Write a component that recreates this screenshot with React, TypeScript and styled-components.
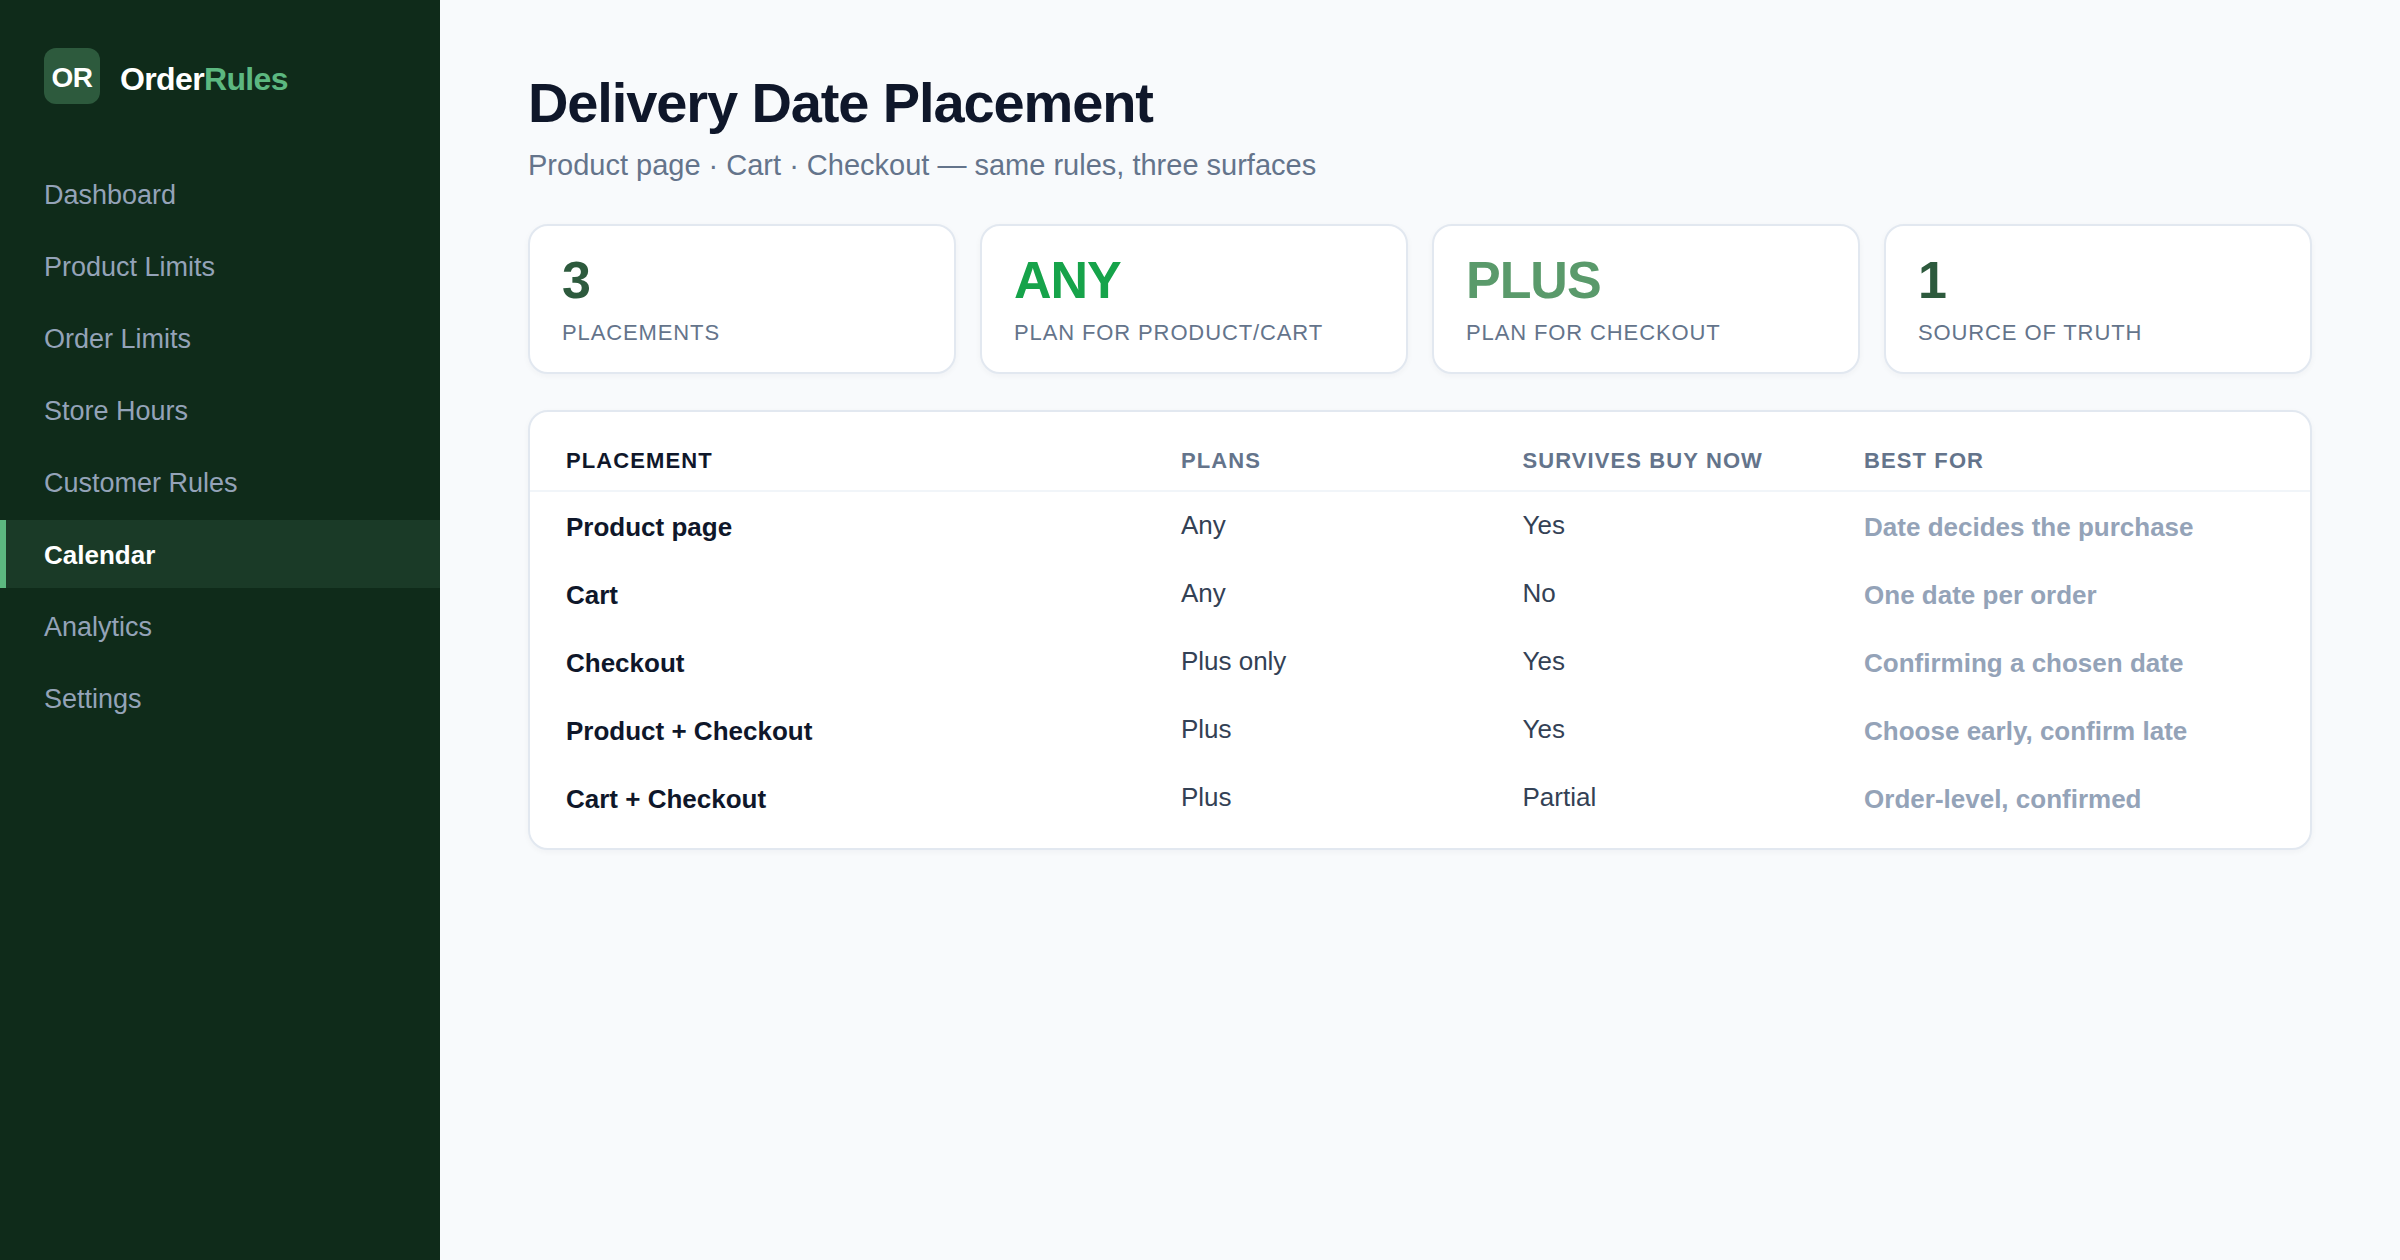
import React from "react";
import styled, { createGlobalStyle } from "styled-components";

const GlobalStyle = createGlobalStyle`
  *, *::before, *::after { box-sizing: border-box; }
  body {
    margin: 0;
    background: #f8fafc;
    color: #0f172a;
    font-family: "Helvetica Neue", "Liberation Sans", Arial, sans-serif;
    -webkit-font-smoothing: antialiased;
  }
`;

const Layout = styled.div`
  display: flex;
  min-height: 100vh;
`;

const Sidebar = styled.aside`
  flex: 0 0 440px;
  padding: 48px 0;
  background: #0f2b1a;
`;

const Brand = styled.div`
  display: flex;
  align-items: center;
  gap: 20px;
  padding: 0 44px;
  margin-bottom: 56px;
`;

const Badge = styled.span`
  display: grid;
  place-items: center;
  width: 56px;
  height: 56px;
  padding-top: 4px;
  border-radius: 12px;
  background: #2d5a3d;
  color: #fff;
  font-size: 28px;
  line-height: 32px;
  font-weight: 700;
  letter-spacing: -0.02em;
`;

const BrandName = styled.span`
  padding-top: 6px;
  color: #fff;
  font-size: 32px;
  line-height: 36px;
  font-weight: 700;
  letter-spacing: -0.02em;
`;

const BrandAccent = styled.span`
  color: #5cb880;
`;

const NavList = styled.ul`
  display: flex;
  flex-direction: column;
  gap: 4px;
  margin: 0;
  padding: 0;
  list-style: none;
`;

const NavLink = styled.a<{ $active?: boolean }>`
  display: flex;
  align-items: center;
  height: 68px;
  padding: 2px 44px 0 38px;
  border-left: 6px solid ${(p) => (p.$active ? "#5cb880" : "transparent")};
  background: ${(p) => (p.$active ? "#1a3a27" : "transparent")};
  color: ${(p) => (p.$active ? "#fff" : "#94a3b8")};
  font-size: ${(p) => (p.$active ? "26px" : "27px")};
  line-height: 32px;
  font-weight: ${(p) => (p.$active ? 700 : 500)};
  text-decoration: none;
`;

const Main = styled.main`
  flex: 1;
  min-width: 0;
  padding: 68px 88px;
`;

const Title = styled.h1`
  margin: 0 0 10px;
  font-size: 56px;
  line-height: 70px;
  font-weight: 700;
  letter-spacing: -0.02em;
`;

const Subtitle = styled.p`
  margin: 0 0 42px;
  color: #64748b;
  font-size: 29px;
  line-height: 34px;
  font-weight: 500;
`;

const Card = styled.section`
  border: 2px solid #e2e8f0;
  border-radius: 20px;
  background: #fff;
  box-shadow: 0 2px 6px rgba(15, 23, 42, 0.04);
`;

const Stats = styled.div`
  display: grid;
  grid-template-columns: repeat(4, 1fr);
  gap: 24px;
  margin-bottom: 36px;
`;

const StatCard = styled(Card)`
  padding: 28px 32px 24px;
`;

const StatValue = styled.div<{ $color: string }>`
  margin-bottom: 12px;
  color: ${(p) => p.$color};
  font-size: 52px;
  line-height: 52px;
  font-weight: 700;
  letter-spacing: -0.02em;
`;

const StatLabel = styled.div`
  color: #64748b;
  font-size: 22px;
  line-height: 30px;
  font-weight: 500;
  letter-spacing: 0.04em;
  text-transform: uppercase;
`;

const TableCard = styled(Card)`
  padding: 16px 0;
`;

const Table = styled.table`
  display: block;
  width: 100%;
  text-align: left;

  thead, tbody { display: block; }
`;

const Row = styled.tr`
  display: grid;
  grid-template-columns: 36fr 20fr 20fr 24fr;
  padding: 0 36px;
`;

const HeadRow = styled(Row)`
  border-bottom: 2px solid #f1f5f9;
`;

const HeadCell = styled.th<{ $strong?: boolean }>`
  padding: 18px 0 14px;
  color: ${(p) => (p.$strong ? "#0f172a" : "#64748b")};
  font-size: 22px;
  line-height: 30px;
  font-weight: 700;
  letter-spacing: 0.05em;
  text-transform: uppercase;
`;

const NameCell = styled.th`
  padding: 18px 0 16px;
  font-size: 26px;
  line-height: 34px;
  font-weight: 700;
`;

const Cell = styled.td`
  padding: 18px 0 20px;
  color: #334155;
  font-size: 26px;
  line-height: 30px;
`;

const NoteCell = styled.td`
  padding: 18px 0 16px;
  color: #94a3b8;
  font-size: 26px;
  line-height: 34px;
  font-weight: 700;
`;

const navItems = [
  "Dashboard",
  "Product Limits",
  "Order Limits",
  "Store Hours",
  "Customer Rules",
  "Calendar",
  "Analytics",
  "Settings",
];

const stats = [
  { value: "3", label: "Placements", color: "#2d5a3d" },
  { value: "ANY", label: "Plan for product/cart", color: "#16a34a" },
  { value: "PLUS", label: "Plan for checkout", color: "#5a9a6b" },
  { value: "1", label: "Source of truth", color: "#2d5a3d" },
];

const columns = ["Placement", "Plans", "Survives Buy Now", "Best for"];

const placements = [
  { name: "Product page", plans: "Any", survives: "Yes", bestFor: "Date decides the purchase" },
  { name: "Cart", plans: "Any", survives: "No", bestFor: "One date per order" },
  { name: "Checkout", plans: "Plus only", survives: "Yes", bestFor: "Confirming a chosen date" },
  { name: "Product + Checkout", plans: "Plus", survives: "Yes", bestFor: "Choose early, confirm late" },
  { name: "Cart + Checkout", plans: "Plus", survives: "Partial", bestFor: "Order-level, confirmed" },
];

export default function App() {
  const current = "Calendar";

  return (
    <>
      <GlobalStyle />
      <Layout>
        <Sidebar>
          <Brand>
            <Badge>OR</Badge>
            <BrandName>
              Order<BrandAccent>Rules</BrandAccent>
            </BrandName>
          </Brand>
          <nav aria-label="Main">
            <NavList>
              {navItems.map((item) => (
                <li key={item}>
                  <NavLink
                    href="#"
                    $active={item === current}
                    aria-current={item === current ? "page" : undefined}
                  >
                    {item}
                  </NavLink>
                </li>
              ))}
            </NavList>
          </nav>
        </Sidebar>
        <Main>
          <Title>Delivery Date Placement</Title>
          <Subtitle>Product page · Cart · Checkout — same rules, three surfaces</Subtitle>
          <Stats>
            {stats.map((s) => (
              <StatCard key={s.label}>
                <StatValue $color={s.color}>{s.value}</StatValue>
                <StatLabel>{s.label}</StatLabel>
              </StatCard>
            ))}
          </Stats>
          <TableCard>
            <Table>
              <thead>
                <HeadRow>
                  {columns.map((c, i) => (
                    <HeadCell key={c} scope="col" $strong={i === 0}>
                      {c}
                    </HeadCell>
                  ))}
                </HeadRow>
              </thead>
              <tbody>
                {placements.map((p) => (
                  <Row key={p.name}>
                    <NameCell scope="row">{p.name}</NameCell>
                    <Cell>{p.plans}</Cell>
                    <Cell>{p.survives}</Cell>
                    <NoteCell>{p.bestFor}</NoteCell>
                  </Row>
                ))}
              </tbody>
            </Table>
          </TableCard>
        </Main>
      </Layout>
    </>
  );
}
